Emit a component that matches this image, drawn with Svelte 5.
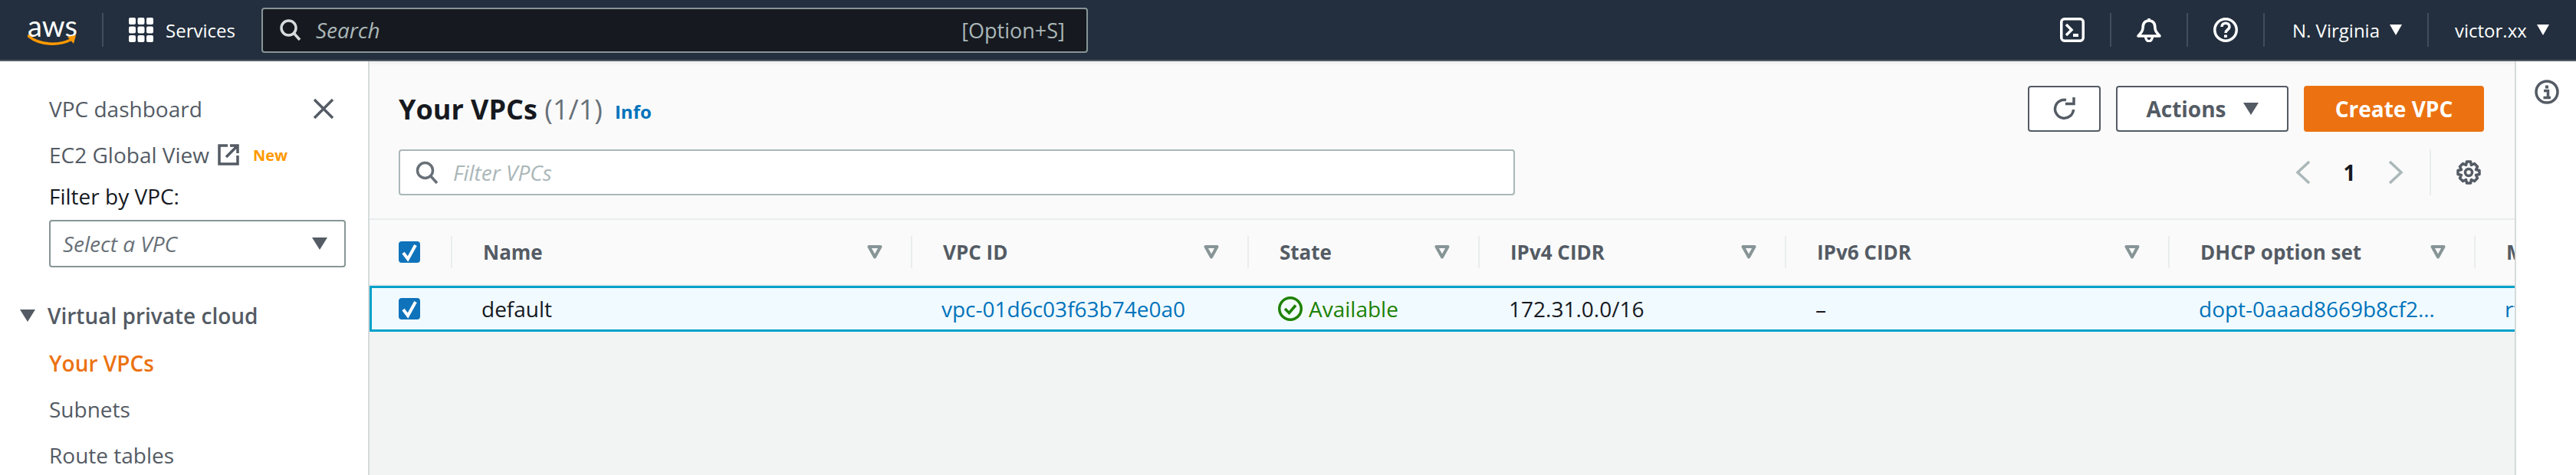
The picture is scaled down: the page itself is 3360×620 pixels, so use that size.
<script lang="ts">
    const columns = [
        { label: "Name", width: 600, value: "default" },
        { label: "VPC ID", width: 439, value: "vpc-01d6c03f63b74e0a0", link: true },
        { label: "State", width: 301, value: "Available", status: true },
        { label: "IPv4 CIDR", width: 400, value: "172.31.0.0/16" },
        { label: "IPv6 CIDR", width: 500, value: "–" },
        { label: "DHCP option set", width: 399, value: "dopt-0aaad8669b8cf2…", link: true },
        { label: "Main route table", width: 300, value: "rtb-0c1f2a7d", link: true },
    ];
</script>

<div class="console">
    <header class="topbar">
        <div class="logo">
            <span class="logo-word">aws</span>
            <svg class="smile" viewBox="0 0 64 16" width="64" height="16">
                <path d="M1 2 C 16 14, 40 15, 56 7" fill="none" stroke="#f90" stroke-width="3.5" stroke-linecap="round" />
                <path d="M52 3 L63 1 L60 12 Z" fill="#f90" />
            </svg>
        </div>
        <span class="bar-sep first"></span>
        <div class="services">
            <svg viewBox="0 0 32 32" width="32" height="32" fill="#fff">
                {#each [0, 11.5, 23] as y}
                    {#each [0, 11.5, 23] as x}
                        <rect {x} {y} width="9" height="9" rx="2" />
                    {/each}
                {/each}
            </svg>
            <span>Services</span>
        </div>
        <div class="global-search">
            <svg viewBox="0 0 28 28" width="28" height="28" fill="none" stroke="#d5dbdb" stroke-width="3.5">
                <circle cx="11.5" cy="11.5" r="9.5" />
                <path d="M18 18 L26 27" />
            </svg>
            <span class="search-text">Search</span>
            <span class="shortcut">[Option+S]</span>
        </div>
        <div class="bar-right">
            <div class="bar-icon">
                <svg viewBox="0 0 32 32" width="32" height="32" fill="none" stroke="#fff" stroke-width="3.5">
                    <rect x="1.75" y="1.75" width="28.5" height="28.5" rx="4" />
                    <path d="M8 9 L15 16 L8 23" />
                    <path d="M17 23 H24" stroke-width="4" />
                </svg>
            </div>
            <div class="bar-icon">
                <svg viewBox="0 0 32 32" width="32" height="32" fill="none" stroke="#fff" stroke-width="3.5">
                    <path d="M16 4 C 9 4, 8 10, 8 14 C 8 19, 4 21, 2 24 H30 C 28 21, 24 19, 24 14 C 24 10, 23 4, 16 4 Z" stroke-linejoin="round" />
                    <path d="M16 1 V4" />
                    <path d="M11.5 24 C 11.5 33, 20.5 33, 20.5 24" />
                </svg>
            </div>
            <div class="bar-icon">
                <svg viewBox="0 0 32 32" width="32" height="32" fill="none" stroke="#fff" stroke-width="3.5">
                    <circle cx="16" cy="16" r="14.25" />
                    <path d="M11 12 C 11 5.5, 21 5.5, 21 12 C 21 16, 16 15.5, 16 20" />
                    <rect x="14" y="22.5" width="4" height="3.5" fill="#fff" stroke="none" />
                </svg>
            </div>
            <div class="menu region"><span>N. Virginia</span><i class="caret white"></i></div>
            <div class="menu user"><span>victor.xx</span><i class="caret white"></i></div>
        </div>
    </header>

    <div class="body">
        <aside class="sidenav">
            <div class="nav-row close-row">
                <span>VPC dashboard</span>
                <svg viewBox="0 0 28 28" width="28" height="28" stroke="#545b64" stroke-width="3.5" fill="none">
                    <path d="M2 2 L26 26 M26 2 L2 26" />
                </svg>
            </div>
            <div class="nav-row">
                <span>EC2 Global View</span>
                <svg class="external" viewBox="0 0 28 28" width="28" height="28" fill="none" stroke="#545b64" stroke-width="3.5">
                    <path d="M13 2 H2 V26 H26 V15" />
                    <path d="M11 17 L25 3 M16 2 H26 V12" />
                </svg>
                <span class="new">New</span>
            </div>
            <label class="filter-label" for="vpc-select">Filter by VPC:</label>
            <div class="vpc-select" id="vpc-select">
                <span>Select a VPC</span>
                <i class="caret grey"></i>
            </div>
            <div class="nav-row section">
                <i class="caret grey"></i>
                <span>Virtual private cloud</span>
            </div>
            <div class="nav-row active">Your VPCs</div>
            <div class="nav-row">Subnets</div>
            <div class="nav-row">Route tables</div>
        </aside>

        <main class="content">
            <section class="panel-head">
                <div class="head-row">
                    <h1>Your VPCs <span class="count">(1/1)</span></h1>
                    <a class="info" href="#info">Info</a>
                    <div class="actions">
                        <button class="btn refresh" type="button" aria-label="Refresh">
                            <svg viewBox="0 0 32 32" width="32" height="32" fill="none" stroke="#545b64" stroke-width="3.5">
                                <path d="M27.5 17 A 12 12 0 1 1 18 4.5" />
                                <path d="M17 9.5 H28 V1" />
                            </svg>
                        </button>
                        <button class="btn actions-btn" type="button">Actions <i class="caret grey"></i></button>
                        <button class="btn primary" type="button">Create VPC</button>
                    </div>
                </div>
                <div class="head-row second">
                    <div class="filter-input">
                        <svg viewBox="0 0 30 30" width="30" height="30" fill="none" stroke="#687078" stroke-width="3.5">
                            <circle cx="12.5" cy="12.5" r="10" />
                            <path d="M19 19 L28 29" />
                        </svg>
                        <span>Filter VPCs</span>
                    </div>
                    <div class="pager">
                        <svg viewBox="0 0 20 32" width="20" height="32" fill="none" stroke="#aab7b8" stroke-width="3.5"><path d="M18 2 L3 16 L18 30" /></svg>
                        <span class="page">1</span>
                        <svg viewBox="0 0 20 32" width="20" height="32" fill="none" stroke="#aab7b8" stroke-width="3.5"><path d="M2 2 L17 16 L2 30" /></svg>
                        <span class="pager-sep"></span>
                        <svg viewBox="0 0 32 32" width="32" height="32" fill="none" stroke="#545b64" stroke-width="3.5">
                            <circle cx="16" cy="16" r="4.5" />
                            <path d="M13.5 2 H18.5 L19.5 6.5 L23.5 4.5 L27.5 8.5 L25.5 12.5 L30 13.5 V18.5 L25.5 19.5 L27.5 23.5 L23.5 27.5 L19.5 25.5 L18.5 30 H13.5 L12.5 25.5 L8.5 27.5 L4.5 23.5 L6.5 19.5 L2 18.5 V13.5 L6.5 12.5 L4.5 8.5 L8.5 4.5 L12.5 6.5 Z" stroke-linejoin="round" />
                        </svg>
                    </div>
                </div>
            </section>

            <div class="table">
                <div class="row head">
                    <div class="cell check-cell">
                        <span class="check">
                            <svg viewBox="0 0 28 42" width="28" height="42" fill="none" stroke="#fff" stroke-width="4"><path d="M6 22 L12 30 L22 12" /></svg>
                        </span>
                    </div>
                    {#each columns as col}
                        <div class="cell" style="width: {col.width}px">
                            <span class="col-label">{col.label}</span>
                            <svg class="sort" viewBox="0 0 20 18" width="20" height="18" fill="none" stroke="#879596" stroke-width="4"><path d="M2.5 2 H17.5 L10 15.5 Z" stroke-linejoin="round" /></svg>
                        </div>
                    {/each}
                </div>
                <div class="row selected">
                    <div class="cell check-cell">
                        <span class="check">
                            <svg viewBox="0 0 28 42" width="28" height="42" fill="none" stroke="#fff" stroke-width="4"><path d="M6 22 L12 30 L22 12" /></svg>
                        </span>
                    </div>
                    {#each columns as col}
                        <div class="cell value" style="width: {col.width}px" class:link={col.link} class:status={col.status}>
                            {#if col.status}
                                <svg viewBox="0 0 32 32" width="32" height="32" fill="none" stroke="#1d8102" stroke-width="3.5">
                                    <circle cx="16" cy="16" r="14.25" />
                                    <path d="M9 16 L14.5 21.5 L23 11.5" />
                                </svg>
                            {/if}
                            <span>{col.value}</span>
                        </div>
                    {/each}
                </div>
            </div>
        </main>

        <aside class="tools">
            <svg viewBox="0 0 32 32" width="32" height="32" fill="none" stroke="#545b64" stroke-width="3.5">
                <circle cx="16" cy="16" r="14" />
                <rect x="14" y="7.5" width="4" height="4" fill="#545b64" stroke="none" />
                <path d="M12 14.5 H17.5 V23.5 M11.5 23.5 H21" />
            </svg>
        </aside>
    </div>
</div>

<style>
    :global(body) {
        margin: 0;
        background: #fff;
    }

    .console {
        width: 3360px;
        height: 620px;
        overflow: hidden;
        font-family: "Open Sans", "Noto Sans", sans-serif;
        font-size: 28px;
        color: #16191f;
    }

    .topbar {
        height: 78px;
        display: flex;
        align-items: center;
        background: #232f3e;
        border-bottom: 2px solid #545b64;
        color: #fff;
        font-size: 24px;
    }

    .logo {
        width: 64px;
        height: 44px;
        margin-left: 36px;
        position: relative;
    }

    .logo-word {
        display: block;
        font-family: "Lato", sans-serif;
        font-size: 38px;
        line-height: 32px;
        text-align: center;
    }

    .smile {
        position: absolute;
        left: 0;
        bottom: 0;
    }

    .bar-sep {
        width: 2px;
        height: 44px;
        background: #414d5c;
    }

    .bar-sep.first {
        margin-left: 33px;
    }

    .services {
        display: flex;
        align-items: center;
        gap: 16px;
        margin-left: 33px;
    }

    .global-search {
        width: 1078px;
        height: 59px;
        box-sizing: border-box;
        margin-left: 34px;
        padding: 0 28px 0 22px;
        display: flex;
        align-items: center;
        background: #16191f;
        border: 2px solid #879596;
        border-radius: 4px;
    }

    .search-text {
        margin-left: 19px;
        font-size: 28px;
        font-style: italic;
        color: #aab7b8;
    }

    .shortcut {
        margin-left: auto;
        font-size: 27px;
        color: #aab7b8;
    }

    .bar-right {
        margin-left: auto;
        display: flex;
        height: 44px;
    }

    .bar-icon {
        width: 100px;
        display: flex;
        align-items: center;
        justify-content: center;
        border-right: 2px solid #414d5c;
        box-sizing: border-box;
    }

    .menu {
        display: flex;
        align-items: center;
        gap: 13px;
    }

    .menu.region {
        width: 214px;
        box-sizing: border-box;
        padding-left: 36px;
        border-right: 2px solid #414d5c;
    }

    .menu.user {
        width: 192px;
        box-sizing: border-box;
        padding-left: 34px;
    }

    .caret {
        display: inline-block;
        width: 0;
        height: 0;
        border-left: 8px solid transparent;
        border-right: 8px solid transparent;
    }

    .caret.white {
        border-top: 14px solid #fff;
    }

    .caret.grey {
        border-left-width: 10px;
        border-right-width: 10px;
        border-top: 16px solid #545b64;
    }

    .body {
        display: flex;
        height: 540px;
    }

    .sidenav {
        width: 480px;
        flex: none;
        box-sizing: border-box;
        padding: 32px 29px 0 64px;
        color: #545b64;
    }

    .nav-row {
        height: 60px;
        display: flex;
        align-items: center;
    }

    .close-row {
        justify-content: space-between;
        padding-right: 15px;
    }

    .external {
        margin-left: 11px;
    }

    .new {
        margin-left: 18px;
        color: #f90;
        font-size: 20px;
        font-weight: 700;
    }

    .filter-label {
        display: block;
        height: 48px;
        line-height: 48px;
        color: #16191f;
    }

    .vpc-select {
        height: 62px;
        box-sizing: border-box;
        margin-top: 7px;
        padding: 0 22px 0 16px;
        display: flex;
        align-items: center;
        justify-content: space-between;
        border: 2px solid #879596;
        border-radius: 4px;
        font-style: italic;
        color: #687078;
    }

    .section {
        margin: 33px 0 2px -38px;
        gap: 16px;
        font-weight: 600;
    }

    .active {
        color: #ec7211;
        font-weight: 600;
    }

    .content {
        width: 2800px;
        flex: none;
        overflow: hidden;
        background: #f2f3f3;
        padding-top: 4px;
        box-sizing: border-box;
        border-left: 2px solid #d5dbdb;
    }

    .panel-head {
        height: 203px;
        box-sizing: border-box;
        padding: 28px 40px 0 38px;
        background: #fafafa;
        border-bottom: 2px solid #eaeded;
    }

    .head-row {
        display: flex;
        align-items: center;
        height: 60px;
    }

    .head-row.second {
        margin-top: 23px;
    }

    h1 {
        margin: 0;
        font-size: 36px;
        font-weight: 700;
    }

    .count {
        font-weight: 400;
        color: #687078;
    }

    .info {
        margin-left: 16px;
        margin-top: 6px;
        color: #0073bb;
        font-size: 24px;
        font-weight: 700;
        text-decoration: none;
    }

    .actions {
        margin-left: auto;
        display: flex;
        gap: 20px;
    }

    .btn {
        height: 60px;
        box-sizing: border-box;
        display: flex;
        align-items: center;
        justify-content: center;
        border: 2px solid #545b64;
        border-radius: 4px;
        background: #fff;
        color: #545b64;
        font: inherit;
        font-weight: 700;
    }

    .refresh {
        width: 95px;
    }

    .actions-btn {
        width: 225px;
        gap: 22px;
    }

    .primary {
        width: 235px;
        background: #ec7211;
        border-color: #ec7211;
        color: #fff;
    }

    .filter-input {
        width: 1456px;
        height: 60px;
        box-sizing: border-box;
        padding: 0 20px;
        display: flex;
        align-items: center;
        gap: 19px;
        background: #fff;
        border: 2px solid #aab7b8;
        border-radius: 4px;
        font-style: italic;
        color: #aab7b8;
    }

    .pager {
        margin-left: auto;
        display: flex;
        align-items: center;
        height: 60px;
        margin-right: 4px;
    }

    .page {
        width: 101px;
        text-align: center;
        font-weight: 700;
    }

    .pager-sep {
        width: 2px;
        height: 60px;
        margin: 0 33px 0 34px;
        background: #eaeded;
    }

    .row {
        display: flex;
    }

    .row.head {
        height: 86px;
        background: #fafafa;
        border-bottom: 2px solid #eaeded;
        box-sizing: border-box;
    }

    .row.selected {
        height: 60px;
        box-sizing: border-box;
        background: #f1faff;
        border: 3px solid #00a1c9;
        border-right: none;
    }

    .cell {
        flex: none;
        box-sizing: border-box;
        display: flex;
        align-items: center;
        padding: 0 39px 0 40px;
        position: relative;
    }

    .check-cell {
        width: 108px;
        padding-left: 38px;
    }

    .selected .check-cell {
        left: -3px;
    }

    .selected .value {
        left: -5px;
    }

    .head .cell::after {
        content: "";
        position: absolute;
        right: 0;
        top: 21px;
        height: 42px;
        width: 2px;
        background: #eaeded;
    }

    .col-label {
        font-weight: 700;
        font-size: 26px;
        color: #545b64;
        white-space: nowrap;
    }

    .sort {
        margin-left: auto;
    }

    .check {
        width: 28px;
        height: 28px;
        display: block;
        background: #0f73bb;
        border-radius: 4px;
        overflow: hidden;
    }

    .check svg {
        display: block;
        margin-top: -7px;
    }

    .value {
        white-space: nowrap;
    }

    .link {
        color: #0073bb;
    }

    .status {
        color: #1d8102;
        gap: 8px;
    }

    .tools {
        width: 80px;
        flex: none;
        box-sizing: border-box;
        padding: 24px 0 0 24px;
        border-left: 2px solid #d5dbdb;
    }
</style>
